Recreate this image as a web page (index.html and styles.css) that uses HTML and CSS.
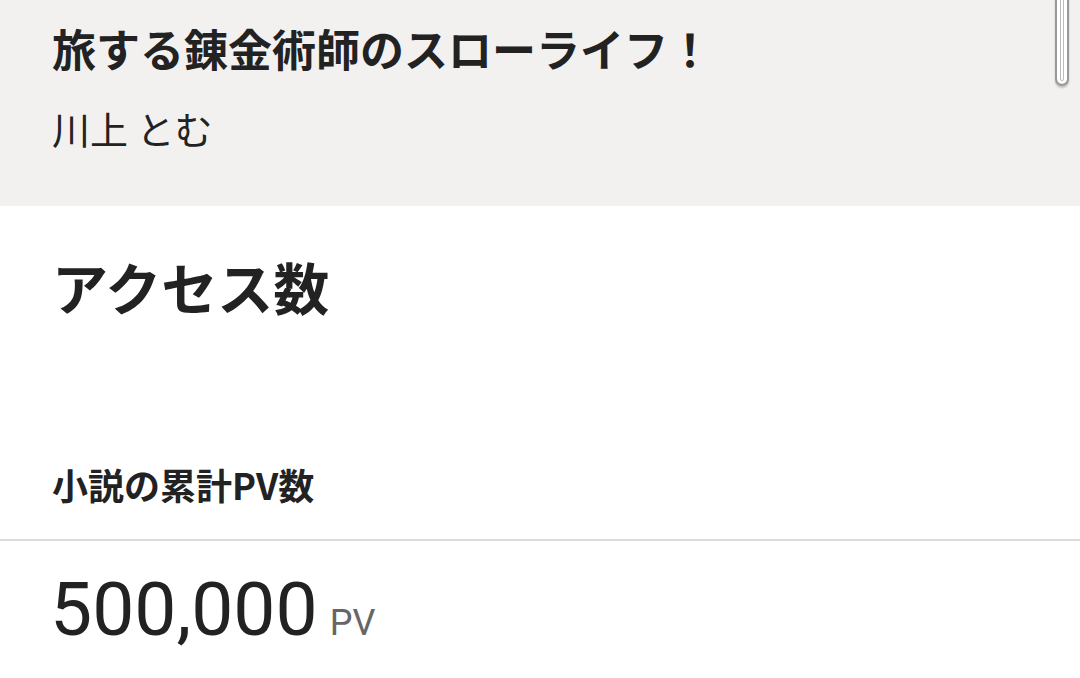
FILE: index.html
```html
<!DOCTYPE html>
<html lang="ja">
<head>
<meta charset="utf-8">
<link rel="stylesheet" href="styles.css">
</head>
<body>
<header class="work">
  <h1 class="work-title">旅する錬金術師のスローライフ！</h1>
  <p class="work-author">川上 とむ</p>
</header>
<main class="access">
  <h2 class="access-title">アクセス数</h2>
  <section class="stat">
    <h3 class="stat-label">小説の累計PV数</h3>
    <div class="stat-value"><span class="num">500,000</span><span class="unit">PV</span></div>
  </section>
</main>
<div class="scroll-thumb"></div>
</body>
</html>
```
FILE: styles.css
```css
html, body {
  margin: 0;
  padding: 0;
  background: #fff;
  overflow: hidden;
}
body {
  font-family: "Noto Sans CJK JP", "Noto Sans", sans-serif;
  color: #222;
  width: 1080px;
  height: 678px;
  position: relative;
}
.work {
  background: #f2f1f0;
  height: 206px;
  box-sizing: border-box;
  padding: 18px 52px 0;
}
.work-title {
  margin: 0;
  font-size: 44px;
  font-weight: 700;
  line-height: 60px;
}
.work-author {
  margin: 25px 0 0;
  font-size: 38px;
  font-weight: 400;
  line-height: 50px;
}
.access-title {
  margin: 0;
  padding: 40px 52px 0;
  font-size: 56px;
  font-weight: 700;
  line-height: 80px;
}
.stat-label {
  margin: 0;
  padding: 133px 52px 0;
  font-size: 36px;
  font-weight: 700;
  line-height: 50px;
  height: 80px;
  border-bottom: 2px solid #dcdcdc;
}
.stat-value {
  padding: 18px 50px 0;
  display: flex;
  align-items: baseline;
  gap: 12px;
}
.num {
  font-family: Roboto, "Noto Sans", sans-serif;
  font-size: 75px;
  line-height: 100px;
}
.unit {
  font-family: Roboto, "Noto Sans", sans-serif;
  font-size: 36px;
  color: #666;
}
.scroll-thumb {
  position: absolute;
  top: -10px;
  left: 1055px;
  width: 10px;
  height: 92px;
  border: 2px solid #999;
  border-radius: 0 0 7px 7px;
  background: #fff;
  box-shadow: inset 0 0 0 3px #fff, inset 0 0 0 4px #bbb, 0 2px 2px rgba(0,0,0,0.2);
}
```
